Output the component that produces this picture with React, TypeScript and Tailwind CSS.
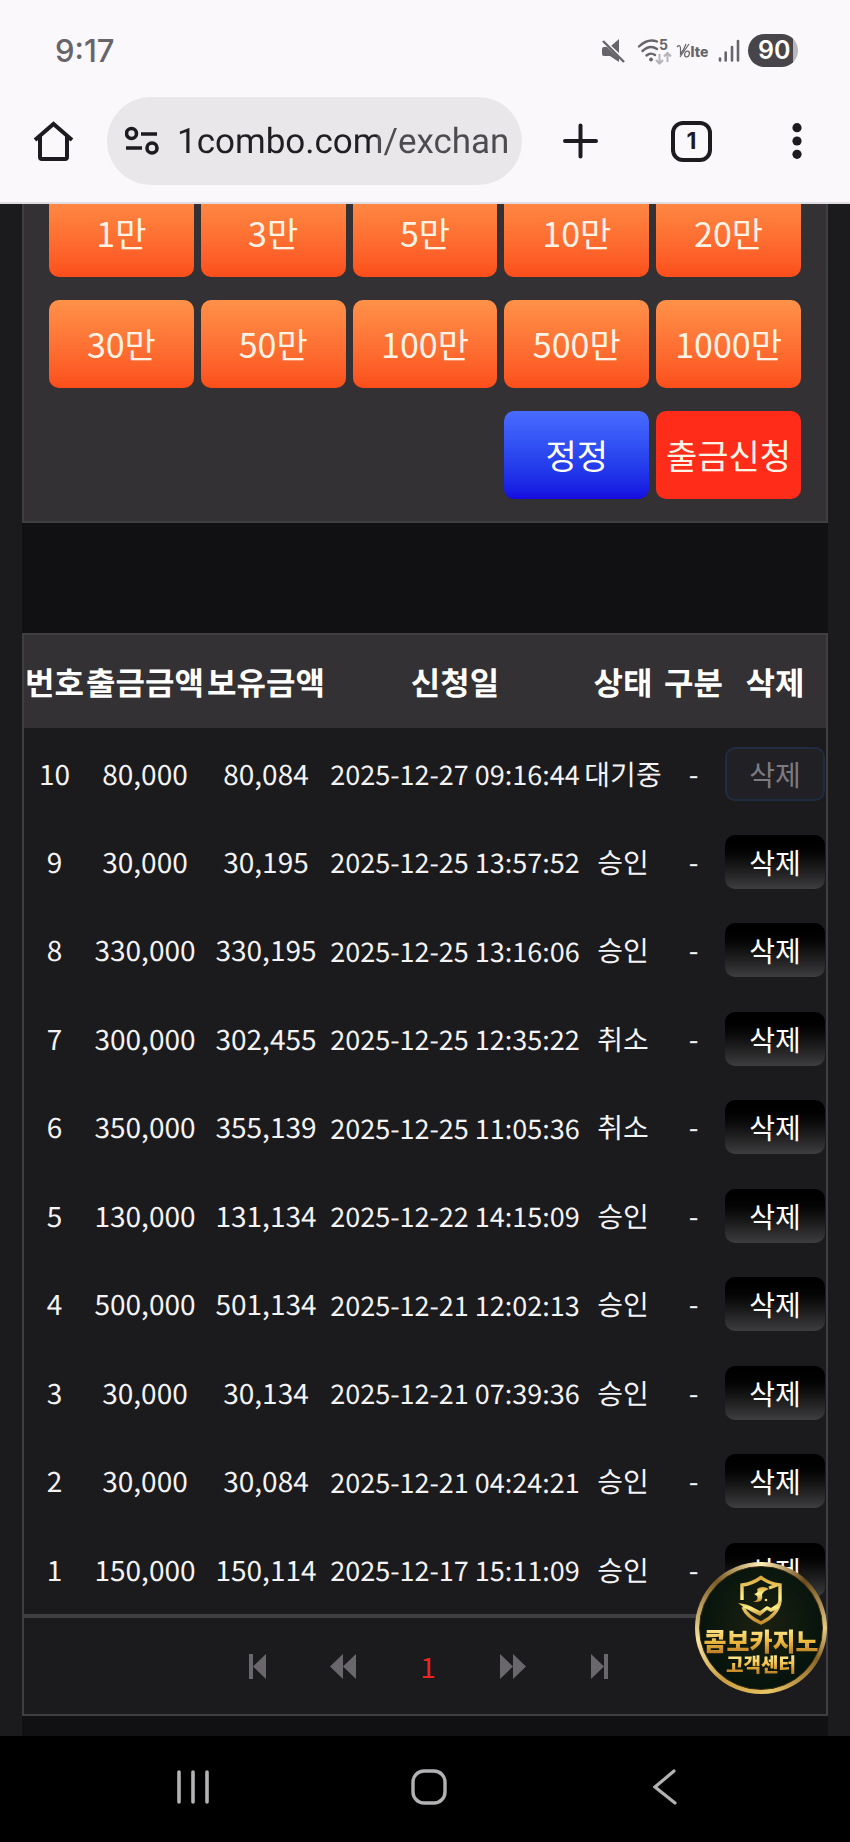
import React, { useState } from "react";

type Withdrawal = {
  id: number;
  amount: string;
  balance: string;
  date: string;
  status: string;
};

const AMOUNTS = [
  "1만",
  "3만",
  "5만",
  "10만",
  "20만",
  "30만",
  "50만",
  "100만",
  "500만",
  "1000만",
];

const ROWS: Withdrawal[] = [
  { id: 10, amount: "80,000", balance: "80,084", date: "2025-12-27 09:16:44", status: "대기중" },
  { id: 9, amount: "30,000", balance: "30,195", date: "2025-12-25 13:57:52", status: "승인" },
  { id: 8, amount: "330,000", balance: "330,195", date: "2025-12-25 13:16:06", status: "승인" },
  { id: 7, amount: "300,000", balance: "302,455", date: "2025-12-25 12:35:22", status: "취소" },
  { id: 6, amount: "350,000", balance: "355,139", date: "2025-12-25 11:05:36", status: "취소" },
  { id: 5, amount: "130,000", balance: "131,134", date: "2025-12-22 14:15:09", status: "승인" },
  { id: 4, amount: "500,000", balance: "501,134", date: "2025-12-21 12:02:13", status: "승인" },
  { id: 3, amount: "30,000", balance: "30,134", date: "2025-12-21 07:39:36", status: "승인" },
  { id: 2, amount: "30,000", balance: "30,084", date: "2025-12-21 04:24:21", status: "승인" },
  { id: 1, amount: "150,000", balance: "150,114", date: "2025-12-17 15:11:09", status: "승인" },
];

function StatusBar() {
  return (
    <div className="flex h-[97px] items-center justify-between pl-[55px] pr-[52px] pt-1 text-[#67656a]">
      <span className="font-['Inter',sans-serif] text-[31px] font-medium leading-none">
        9:17
      </span>
      <div className="flex items-center">
        {/* Muted */}
        <svg width="24" height="24" viewBox="0 0 24 24" className="mr-3">
          <path d="M1 10 Q1 8 3 8 H6 L18 19 V23 L9 17 H3 Q1 17 1 15 Z" fill="currentColor" />
          <path d="M10 7 L18 0 V14 Z" fill="currentColor" />
          <path d="M3 1 L24 22" stroke="#fbf8fc" strokeWidth="2" />
          <path d="M2 2 L23 23" stroke="currentColor" strokeWidth="2.400" />
        </svg>
        {/* Wi-Fi with traffic arrows */}
        <svg width="35" height="34" viewBox="0 -5 35 34" className="mr-1">
          <g fill="none" stroke="currentColor" strokeWidth="2.400" strokeLinecap="round">
            <path d="M2 7.500 Q11 -1 20 2.500" />
            <path d="M5.500 12 Q13 5 20 10" />
            <path d="M9.500 16.500 Q13.500 13 18 16" />
          </g>
          <circle cx="14" cy="20.500" r="1.900" fill="currentColor" />
          <g fill="none" stroke="#b5b3b8" strokeWidth="2">
            <path d="M22.500 15 V24 M19 21 L22.500 24.500 L26 21" />
            <path d="M30.500 23 V14.500 M27 17.500 L30.500 14 L34 17.500" />
          </g>
          <text
            x="22"
            y="11"
            fontSize="14"
            fontWeight="700"
            fontFamily="Inter, sans-serif"
            fill="currentColor"
          >
            5
          </text>
        </svg>
        {/* VoLTE */}
        <svg width="34" height="18" viewBox="0 0 34 18" className="mr-2">
          <g fill="none" stroke="currentColor" strokeWidth="1.200">
            <path d="M1 5 Q4 2 4.500 6 L4.500 12 Q8 8 10 2 M4 15 L13 2" />
            <ellipse cx="11" cy="12" rx="2.300" ry="3" transform="rotate(20 11 12)" />
          </g>
          <text
            x="14.500"
            y="15"
            fontSize="14"
            fontWeight="800"
            fontFamily="Inter, sans-serif"
            fill="currentColor"
          >
            lte
          </text>
        </svg>
        {/* Signal */}
        <svg width="22" height="24" viewBox="0 0 22 24" className="mr-2">
          <g stroke="currentColor" strokeWidth="2.600" strokeLinecap="round">
            <path d="M2 19.500 V21.500 M7.700 13.500 V21.500 M14 8 V21.500 M20 2 V21.500" />
          </g>
        </svg>
        <span className="flex h-[33px] w-[50px] items-center rounded-full bg-[linear-gradient(90deg,#474549_90%,#b9b7bc_90%)] pl-2.5 font-['Inter',sans-serif] text-[25px] font-semibold leading-none text-white">
          90
        </span>
      </div>
    </div>
  );
}

function BrowserBar() {
  const [url, setUrl] = useState("1combo.com/exchan");

  return (
    <div className="flex items-center pb-[17px] pl-[33px] pr-12 text-[#1d1b20]">
      <button aria-label="홈" className="mr-[33px]">
        <svg width="41" height="42" viewBox="0 0 41 42" fill="none" stroke="currentColor" strokeWidth="4">
          <path d="M2 20 L20.500 4 L39 20" />
          <path d="M7 16 V37 Q7 39 9 39 H32 Q34 39 34 37 V16" />
        </svg>
      </button>
      <div className="flex h-[88px] min-w-0 flex-1 items-center rounded-full bg-[#eae7eb] pl-[18px] pr-3">
        <svg
          width="34"
          height="30"
          viewBox="0 0 34 30"
          className="mr-[18px] shrink-0"
          fill="none"
          stroke="currentColor"
          strokeWidth="3.600"
        >
          <circle cx="6.500" cy="7.500" r="5" />
          <circle cx="27" cy="22" r="5" />
          <path d="M16 8 H32 M1 22 H17" />
        </svg>
        <input
          aria-label="주소"
          value={url}
          onChange={(e) => setUrl(e.target.value)}
          className="w-full min-w-0 bg-[linear-gradient(90deg,#1f1e22_200px,#4d4b50_200px)] bg-clip-text pt-0.5 font-['Roboto',sans-serif] text-[35px] text-transparent outline-none [text-rendering:geometricPrecision]"
        />
      </div>
      <button aria-label="새 탭" className="ml-[41px]">
        <svg width="35" height="36" viewBox="0 0 35 36" stroke="currentColor" strokeWidth="4" strokeLinecap="round">
          <path d="M17.500 2.500 V33.500 M2 18 H33" />
        </svg>
      </button>
      <button
        aria-label="탭 1개"
        className="ml-[73px] flex h-[41px] w-[41px] items-center justify-center rounded-xl border-4 border-[#1d1b20] font-['Inter',sans-serif] text-[23px] font-bold leading-none"
      >
        1
      </button>
      <button aria-label="메뉴" className="ml-20">
        <svg width="10" height="36" viewBox="0 0 10 36" fill="currentColor">
          <circle cx="5" cy="4.700" r="4.600" />
          <circle cx="5" cy="18" r="4.600" />
          <circle cx="5" cy="31.300" r="4.600" />
        </svg>
      </button>
    </div>
  );
}

function AmountPanel() {
  return (
    <section className="-mt-[17px] grid grid-cols-5 gap-x-[7px] gap-y-[23px] border-2 border-[#3f3e40] bg-[#333133] px-[25px] pb-[22px] text-[34px] leading-none text-[#fff3e6]">
      {AMOUNTS.map((amount) => (
        <button
          key={amount}
          className="h-[88px] whitespace-nowrap rounded-[10px] bg-gradient-to-b from-[#ff9149] to-[#fb4e1b]"
        >
          {amount}
        </button>
      ))}
      <button className="col-start-4 h-[88px] rounded-[10px] bg-gradient-to-b from-[#4a6bff] to-[#1708e0] text-white">
        정정
      </button>
      <button className="h-[88px] whitespace-nowrap rounded-[10px] bg-[#ff2c1a]">
        출금신청
      </button>
    </section>
  );
}

function HistoryTable() {
  return (
    <table className="w-full table-fixed border-collapse whitespace-nowrap text-center text-[28px] leading-none text-[#f4f3f5] [text-rendering:geometricPrecision]">
      <colgroup>
        <col className="w-[61px]" />
        <col className="w-[120px]" />
        <col className="w-[122px]" />
        <col className="w-[256px]" />
        <col className="w-[80px]" />
        <col className="w-[61px]" />
        <col className="w-[102px]" />
      </colgroup>
      <thead>
        <tr className="h-[94px] border-b-2 border-[#1b1a1c] bg-[#333133] text-[32px] text-white">
          <th className="p-0">번호</th>
          <th className="p-0">출금금액</th>
          <th className="p-0">보유금액</th>
          <th className="p-0">신청일</th>
          <th className="p-0">상태</th>
          <th className="p-0">구분</th>
          <th className="p-0">삭제</th>
        </tr>
      </thead>
      <tbody>
        {ROWS.map((row) => (
          <tr key={row.id} className="odd:h-[88px] even:h-[89px]">
            <td className="p-0">{row.id}</td>
            <td className="p-0">{row.amount}</td>
            <td className="p-0">{row.balance}</td>
            <td className="p-0 text-[27px]">{row.date}</td>
            <td className="p-0">{row.status}</td>
            <td className="p-0">-</td>
            <td className="p-0 px-px">
              <button
                disabled={row.status === "대기중"}
                className="block h-[54px] w-full rounded-[10px] bg-gradient-to-b from-black to-[#3e3d3f] text-white disabled:border-2 disabled:border-[#202c40] disabled:bg-[#212024] disabled:bg-none disabled:text-[#7d7b80]"
              >
                삭제
              </button>
            </td>
          </tr>
        ))}
      </tbody>
    </table>
  );
}

function Pagination() {
  return (
    <nav className="flex h-[102px] items-center justify-center border-4 border-x-2 border-b-2 border-[#3f3e40] bg-[#1b1a1c] pl-1.5 text-[#69676b]">
      <button aria-label="처음" className="flex w-[86px] justify-center">
        <svg width="17" height="25" viewBox="0 0 17 25" fill="currentColor">
          <path d="M0 0 H4 V25 H0 Z M17 0 V25 L4 12.500 Z" />
        </svg>
      </button>
      <button aria-label="이전" className="flex w-[86px] justify-center">
        <svg width="26" height="25" viewBox="0 0 26 25" fill="currentColor">
          <path d="M13 0 V25 L0 12.500 Z M26 0 V25 L13 12.500 Z" />
        </svg>
      </button>
      <button className="w-[84px] text-[28px] leading-none text-[#ee2423]">1</button>
      <button aria-label="다음" className="flex w-[86px] justify-center">
        <svg width="26" height="25" viewBox="0 0 26 25" fill="currentColor">
          <path d="M0 0 V25 L13 12.500 Z M13 0 V25 L26 12.500 Z" />
        </svg>
      </button>
      <button aria-label="마지막" className="flex w-[86px] justify-center">
        <svg width="17" height="25" viewBox="0 0 17 25" fill="currentColor">
          <path d="M13 0 H17 V25 H13 Z M0 0 V25 L13 12.500 Z" />
        </svg>
      </button>
    </nav>
  );
}

function SupportBadge() {
  return (
    <button className="absolute bottom-[42px] right-[23px] h-[132px] w-[132px] rounded-full bg-[conic-gradient(from_0deg,#fff0b8,#6b4a1c_12%,#e8cd83_25%,#8a6526_33%,#e9c667_48%,#c99d41_60%,#f7e3a0_72%,#7d5c25_88%,#fff0b8)] p-1">
      <span className="flex h-full w-full flex-col items-center rounded-full border border-[#3b2b10] bg-[radial-gradient(circle_at_50%_45%,#1c2110,#04130d_75%)] pt-2">
        <svg width="46" height="50" viewBox="0 0 46 50" className="shrink-0">
          <defs>
            <linearGradient id="gold" x1="0" y1="0" x2="0" y2="1">
              <stop offset="0" stopColor="#d9a93c" />
              <stop offset="0.45" stopColor="#fff08c" />
              <stop offset="1" stopColor="#c58d2c" />
            </linearGradient>
          </defs>
          <path
            d="M31 13 L39 10 M4 25 V10 Q14 9 23 2.500 Q32 9 42 10 V26 Q40 40 23 48 Q9 42 5 32"
            fill="none"
            stroke="url(#gold)"
            strokeWidth="3.400"
          />
          <path d="M19 14 Q25 10 31 14 Q25 16 24 20 Q26 28 15 27 Q21 25 19 21 L16 19 Q21 18 19 14 Z" fill="url(#gold)" />
          <path d="M0 28 Q10 29 16 33 L22 36 L29 31 L33 33 L43 26 L40 34 L33 37 L29 35 L22 41 L14 37 Q6 33 0 28 Z" fill="url(#gold)" />
          <circle cx="28" cy="25" r="1.300" fill="#f8df78" />
        </svg>
        <span className="mt-px whitespace-nowrap bg-gradient-to-b from-[#fff2a0] via-[#f3c046] to-[#b97a22] bg-clip-text text-[25px] font-black leading-[28px] text-transparent">
          콤보카지노
        </span>
        <span className="whitespace-nowrap bg-gradient-to-b from-[#fff2a0] via-[#f3c046] to-[#b97a22] bg-clip-text text-[19px] font-black leading-[20px] text-transparent">
          고객센터
        </span>
      </span>
    </button>
  );
}

function SystemNav() {
  return (
    <nav className="flex h-[106px] items-center justify-center bg-black pb-1 pl-2 text-[#b3b1b4]">
      <button aria-label="최근 앱" className="flex w-[28%] justify-center">
        <svg width="32" height="36" viewBox="0 0 32 36" stroke="currentColor" strokeWidth="3.600" strokeLinecap="round">
          <path d="M2 3 V33 M16 3 V33 M30 3 V33" />
        </svg>
      </button>
      <button aria-label="홈 화면" className="flex w-[28%] justify-center">
        <svg width="36" height="36" viewBox="0 0 36 36" fill="none" stroke="currentColor" strokeWidth="3.400">
          <rect x="2" y="2" width="32" height="32" rx="11" />
        </svg>
      </button>
      <button aria-label="뒤로" className="flex w-[28%] justify-center">
        <svg width="24" height="36" viewBox="0 0 24 36" fill="none" stroke="currentColor" strokeWidth="3.200" strokeLinecap="round">
          <path d="M21 2 L2 18 L22 34" />
        </svg>
      </button>
    </nav>
  );
}

export default function App() {
  return (
    <div className="flex min-h-screen flex-col bg-[#1b1a1c] font-['Noto_Sans_CJK_KR',sans-serif]">
      <header className="relative z-10 border-b-2 border-[#dfdde1] bg-[#fbf8fc]">
        <StatusBar />
        <BrowserBar />
      </header>

      <main className="relative flex-1 overflow-hidden px-[22px]">
        <div className="bg-[#111012] pb-5">
          <AmountPanel />
          <section className="mt-[110px] border-2 border-b-0 border-[#3f3e40] bg-[#1b1a1c]">
            <HistoryTable />
          </section>
          <Pagination />
        </div>
        <SupportBadge />
      </main>

      <SystemNav />
    </div>
  );
}
